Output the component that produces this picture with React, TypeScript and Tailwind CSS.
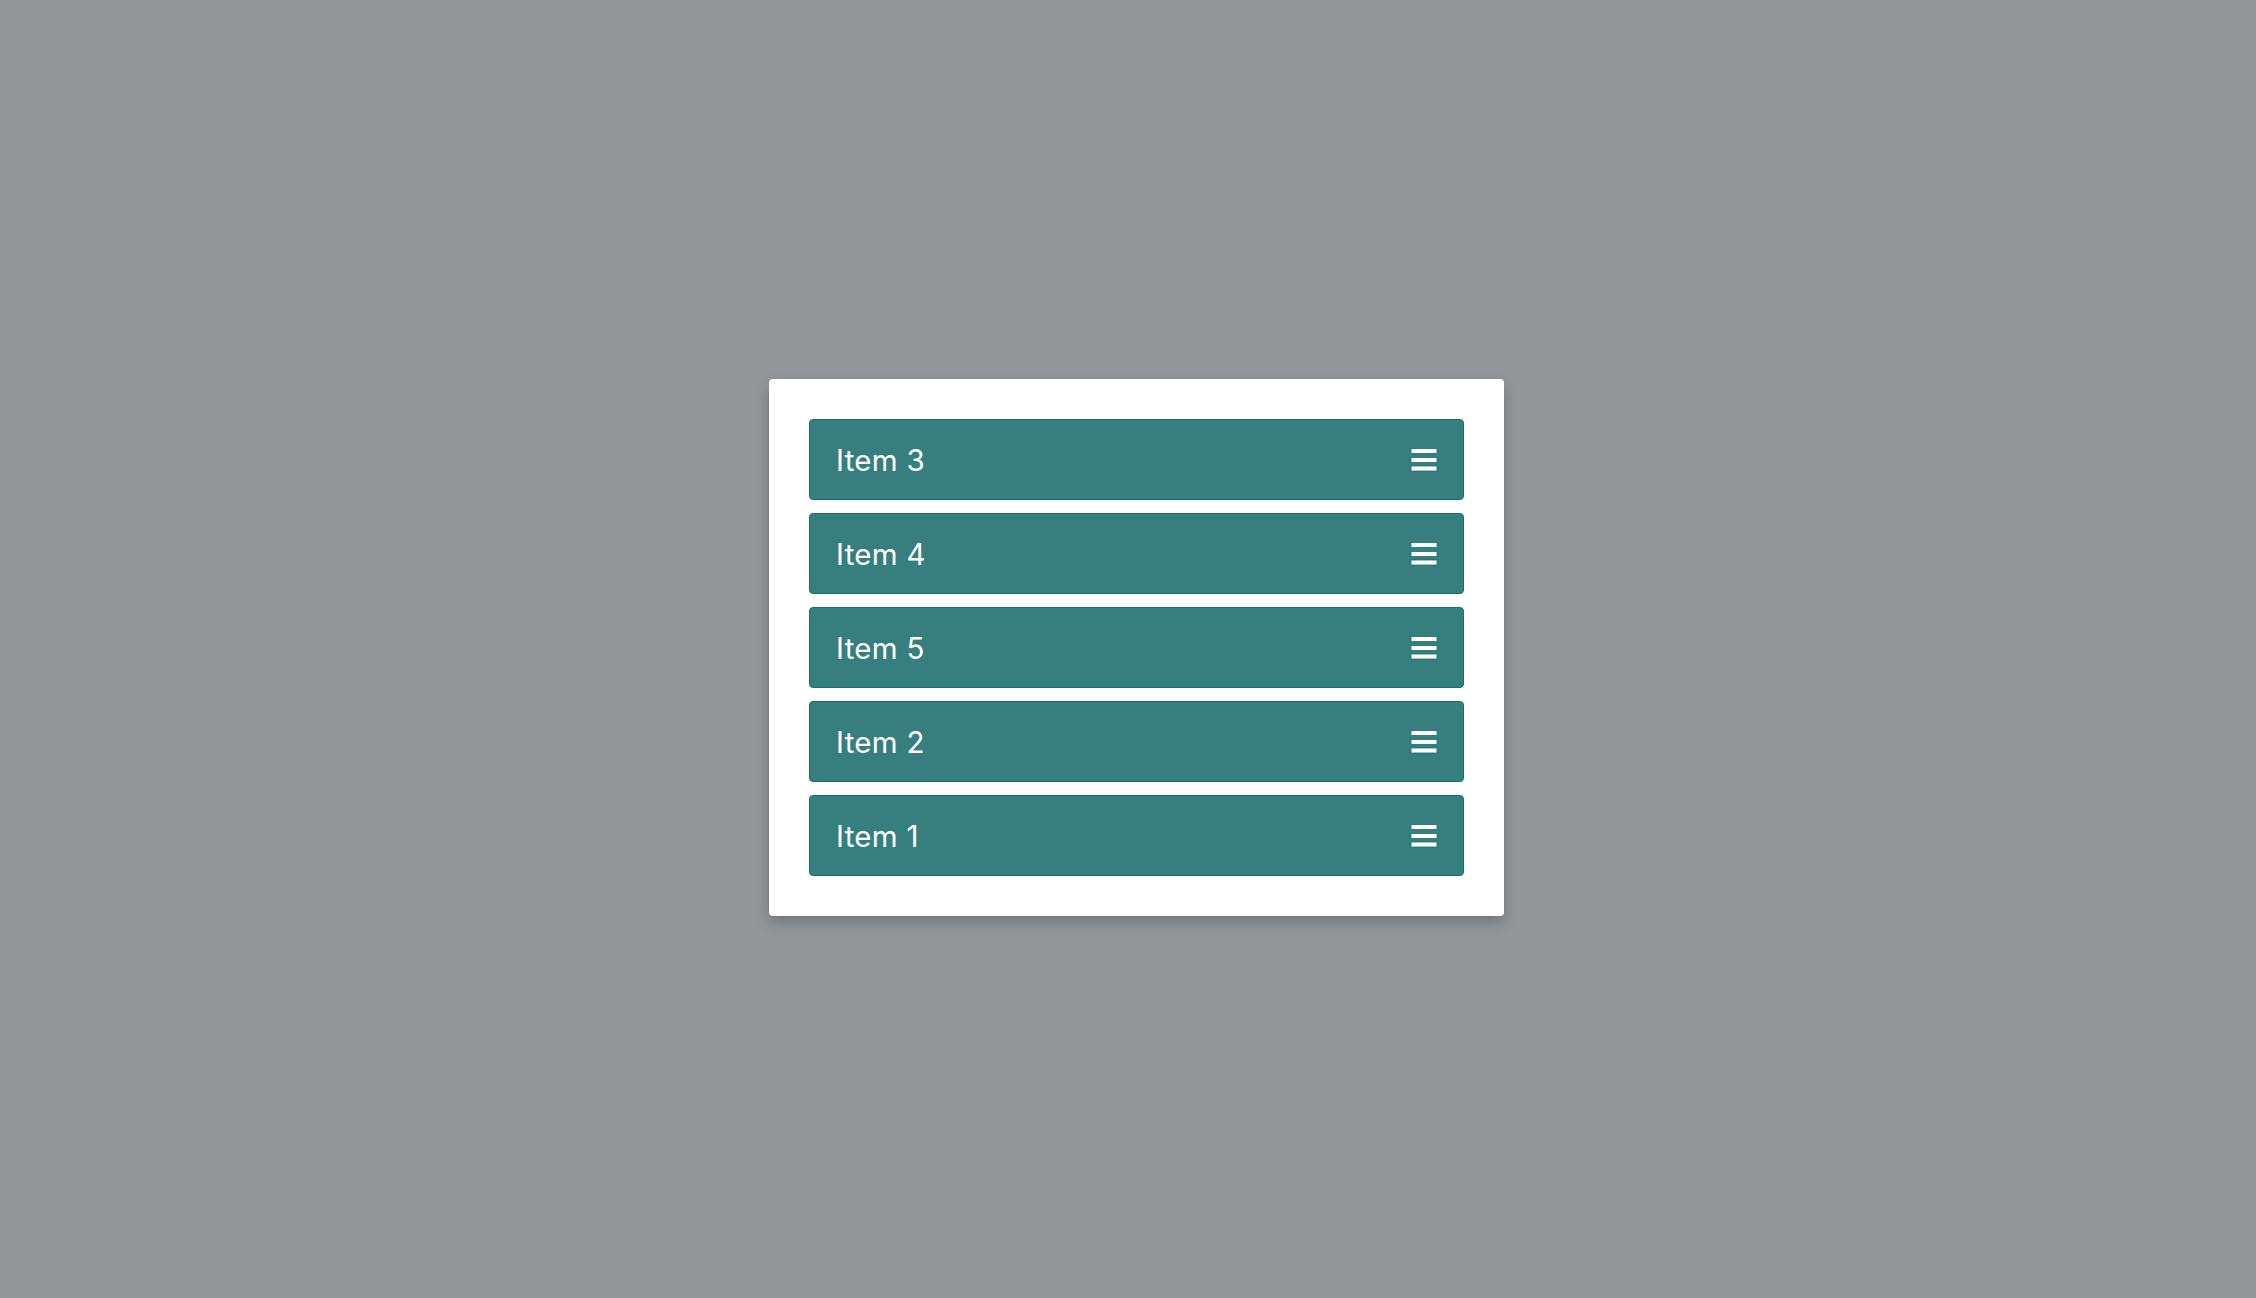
import React from "react"

const ITEMS = ["Item 3", "Item 4", "Item 5", "Item 2", "Item 1"]

function Bars() {
  return (
    <svg className="mt-[2px]" width="28" height="25" viewBox="0 0 28 25" aria-hidden="true">
      <rect x="1" y="0.5" width="26" height="5" fill="#ffffff" stroke="#16706e" strokeWidth="0.8" />
      <rect x="1" y="9.5" width="26" height="5" fill="#ffffff" stroke="#16706e" strokeWidth="0.8" />
      <rect x="1" y="18" width="26" height="5" fill="#ffffff" stroke="#16706e" strokeWidth="0.8" />
    </svg>
  )
}

export default function App() {
  return (
    <div className="h-screen w-full overflow-hidden bg-[#929699] flex items-center justify-center pl-[17px] pb-[4px]">
      <div className="w-[735px] bg-white rounded-[4px] p-10 flex flex-col gap-[13px] shadow-[0_6px_14px_rgba(0,0,0,0.22)]">
        {ITEMS.map((label) => (
          <div
            key={label}
            className="h-[81px] bg-[#377f7e] border border-[#17706e] rounded-[4px] flex items-center justify-between pl-[26px] pr-[25px]"
          >
            <span className="pt-[3px] text-white text-[29.5px] tracking-[0.3px] font-['Inter','Liberation_Sans',sans-serif] leading-none">
              {label}
            </span>
            <Bars />
          </div>
        ))}
      </div>
    </div>
  )
}
